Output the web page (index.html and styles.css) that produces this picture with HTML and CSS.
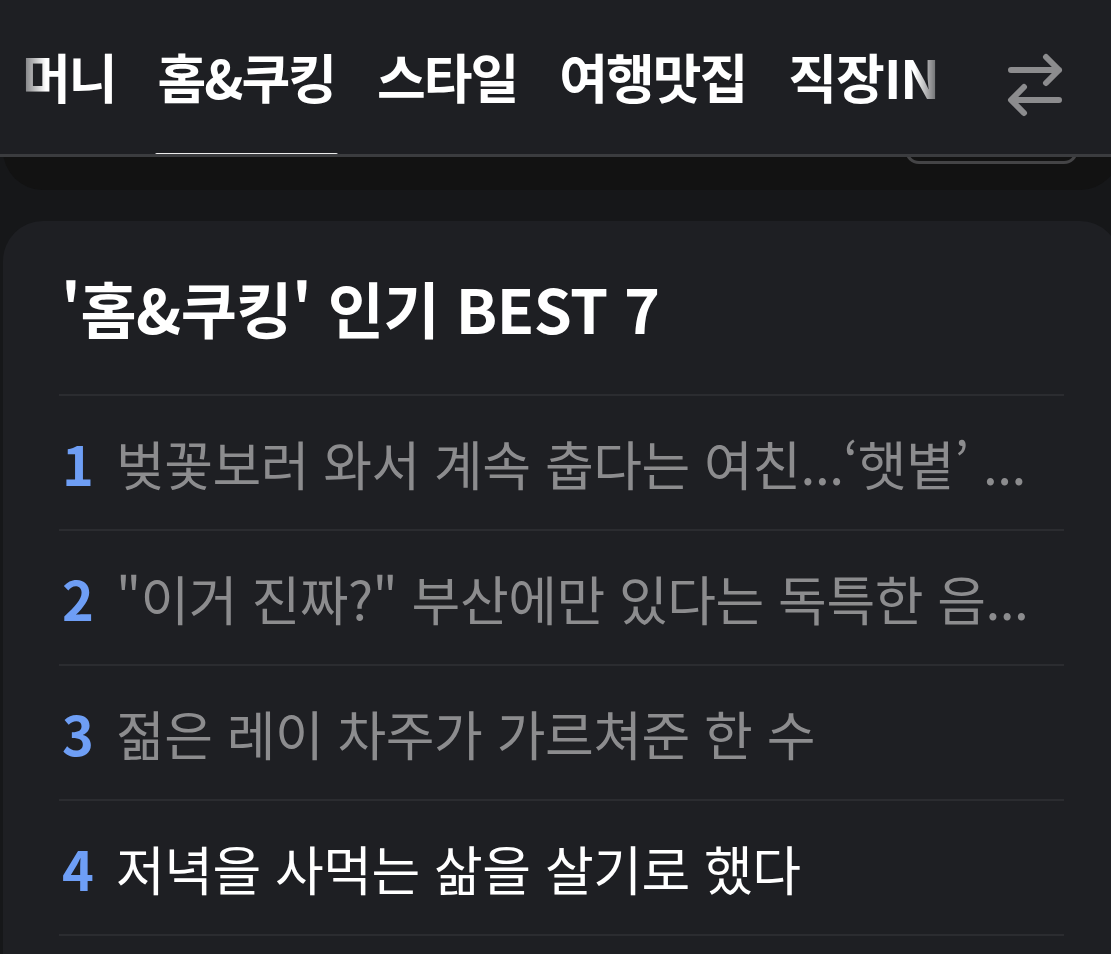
FILE: index.html
```html
<!DOCTYPE html>
<html lang="ko">
<head>
  <meta charset="UTF-8">
  <title>홈&amp;쿠킹 인기</title>
  <meta name="viewport" content="width=device-width, initial-scale=1.0">
  <link rel="stylesheet" href="styles.css">
</head>
<body>
  <header class="topbar">
    <nav class="tabs">
      <div class="tabs-track">
        <a class="tab">머니</a>
        <a class="tab active">홈&amp;쿠킹</a>
        <a class="tab">스타일</a>
        <a class="tab">여행맛집</a>
        <a class="tab">직장IN</a>
      </div>
    </nav>
    <button class="swap-btn" aria-label="전환">
      <svg width="60" height="66" viewBox="0 0 60 66">
        <path d="M5 17 H53 M40 4 L53 17 L40 30" fill="none" stroke="#8c8c8e" stroke-width="6" stroke-linecap="round" stroke-linejoin="round"/>
        <path d="M53 47 H6 M18 34 L5 47 L18 60" fill="none" stroke="#8c8c8e" stroke-width="6" stroke-linecap="round" stroke-linejoin="round"/>
      </svg>
    </button>
  </header>

  <main class="page">
    <section class="prev-card">
      <button class="more-btn"></button>
    </section>

    <section class="card">
      <h2 class="card-title">'홈&amp;쿠킹' 인기 BEST 7</h2>
      <ol class="rank-list">
        <li class="rank-item visited"><span class="num">1</span><span class="text">벚꽃보러 와서 계속 춥다는 여친...‘햇볕’ ...</span></li>
        <li class="rank-item visited"><span class="num">2</span><span class="text">"이거 진짜?" 부산에만 있다는 독특한 음...</span></li>
        <li class="rank-item visited"><span class="num">3</span><span class="text">젊은 레이 차주가 가르쳐준 한 수</span></li>
        <li class="rank-item"><span class="num">4</span><span class="text">저녁을 사먹는 삶을 살기로 했다</span></li>
      </ol>
    </section>
  </main>
</body>
</html>
```

FILE: styles.css
```css
body {
  margin: 0;
  padding: 0;
  background-color: #161719;
  color: #ffffff;
  font-family: 'Noto Sans CJK KR', 'Noto Sans', sans-serif;
  overflow: hidden;
}

.topbar {
  position: fixed;
  top: 0;
  left: 0;
  right: 0;
  height: 154px;
  display: flex;
  background-color: #1e1f23;
  border-bottom: 3px solid #3b3c3f;
  z-index: 10;
}

.tabs {
  width: 950px;
  overflow: hidden;
  -webkit-mask-image: linear-gradient(to right, transparent 8px, #000 46px, #000 915px, transparent 948px);
  mask-image: linear-gradient(to right, transparent 8px, #000 46px, #000 915px, transparent 948px);
}

.tabs-track {
  display: flex;
  gap: 36px;
  height: 100%;
  padding-left: 19px;
}

.tab {
  position: relative;
  display: flex;
  align-items: center;
  padding: 0 3px 2px;
  font-size: 53px;
  font-weight: 700;
  letter-spacing: -2px;
  white-space: nowrap;
  color: #ffffff;
}

.tab:last-child {
  letter-spacing: -1px;
}

.tab.active::after {
  content: "";
  position: absolute;
  left: 0;
  right: 0;
  bottom: -3px;
  height: 4px;
  border-radius: 2px;
  background-color: #ececec;
}

.swap-btn {
  flex: 1;
  display: flex;
  align-items: flex-start;
  justify-content: center;
  padding: 53px 0 0 10px;
  background: none;
  border: none;
}

.prev-card {
  height: 190px;
  margin: 0 -9px 0 3px;
  box-sizing: border-box;
  display: flex;
  justify-content: flex-end;
  align-items: flex-end;
  padding: 0 42px 26px 0;
  background-color: #121212;
  border-radius: 0 0 40px 40px;
}

.more-btn {
  width: 173px;
  height: 60px;
  background: none;
  border: 3px solid #444446;
  border-radius: 14px;
}

.card {
  margin: 31px -9px 0 3px;
  padding: 0 56px;
  background-color: #1e1f23;
  border-radius: 40px 40px 0 0;
  min-height: 760px;
}

.card-title {
  margin: 0;
  height: 175px;
  box-sizing: border-box;
  display: flex;
  align-items: center;
  padding: 0 0 0 2px;
  font-size: 61px;
  font-weight: 700;
  letter-spacing: -0.5px;
  border-bottom: 2px solid #2b2c30;
}

.rank-list {
  list-style: none;
  margin: 0;
  padding: 0;
}

.rank-item {
  height: 133px;
  display: flex;
  align-items: center;
  gap: 22px;
  padding-left: 3px;
  border-bottom: 2px solid #2b2c30;
  white-space: nowrap;
}

.rank-item .num {
  font-size: 54px;
  font-weight: 700;
  color: #6e9ef5;
  min-width: 30px;
}

.rank-item .text {
  font-size: 53px;
  font-weight: 400;
  letter-spacing: -0.5px;
  color: #ffffff;
  overflow: hidden;
  text-overflow: ellipsis;
}

.rank-item.visited .text {
  color: #8c8c8e;
}
```
